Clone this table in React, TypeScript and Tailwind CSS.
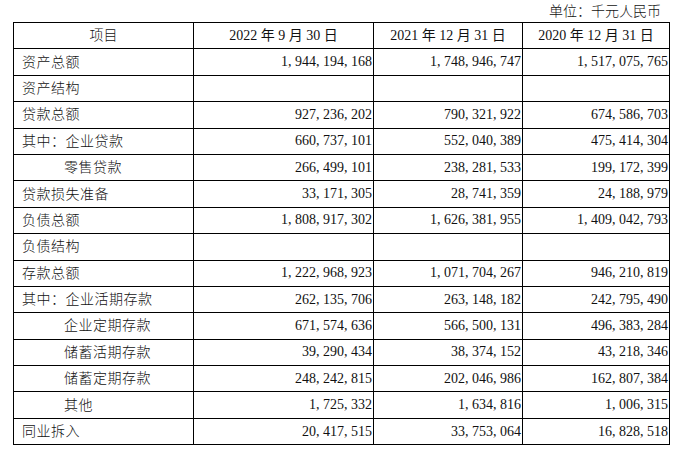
// 资产负债主要指标表
const ROWS: { label: string; indent?: boolean; values?: [string, string, string] }[] = [
  { label: '资产总额', values: ['1, 944, 194, 168', '1, 748, 946, 747', '1, 517, 075, 765'] },
  { label: '资产结构' },
  { label: '贷款总额', values: ['927, 236, 202', '790, 321, 922', '674, 586, 703'] },
  { label: '其中：企业贷款', values: ['660, 737, 101', '552, 040, 389', '475, 414, 304'] },
  { label: '零售贷款', indent: true, values: ['266, 499, 101', '238, 281, 533', '199, 172, 399'] },
  { label: '贷款损失准备', values: ['33, 171, 305', '28, 741, 359', '24, 188, 979'] },
  { label: '负债总额', values: ['1, 808, 917, 302', '1, 626, 381, 955', '1, 409, 042, 793'] },
  { label: '负债结构' },
  { label: '存款总额', values: ['1, 222, 968, 923', '1, 071, 704, 267', '946, 210, 819'] },
  { label: '其中：企业活期存款', values: ['262, 135, 706', '263, 148, 182', '242, 795, 490'] },
  { label: '企业定期存款', indent: true, values: ['671, 574, 636', '566, 500, 131', '496, 383, 284'] },
  { label: '储蓄活期存款', indent: true, values: ['39, 290, 434', '38, 374, 152', '43, 218, 346'] },
  { label: '储蓄定期存款', indent: true, values: ['248, 242, 815', '202, 046, 986', '162, 807, 384'] },
  { label: '其他', indent: true, values: ['1, 725, 332', '1, 634, 816', '1, 006, 315'] },
  { label: '同业拆入', values: ['20, 417, 515', '33, 753, 064', '16, 828, 518'] },
];

const FONT = '"Liberation Serif", "Noto Sans CJK SC", serif';

export default function App() {
  return (
    <div className="h-[452px] w-[680px] overflow-hidden bg-white text-[14px] text-[#111]" style={{ fontFamily: FONT }}>
      {/* titre coupe en haut de la capture */}
      <div className="h-[2px] overflow-hidden pl-[47px] text-[#888]">
        <div className="-mt-[15px] leading-[17px]">（二）资产负债情况表</div>
      </div>

      <div className="flex h-[20px] items-center justify-end pr-[19px] leading-none font-light">单位：千元人民币</div>

      <table className="ml-[13px] w-[656px] table-fixed border-collapse border border-black">
        <colgroup>
          <col className="w-[180px]" />
          <col className="w-[180px]" />
          <col className="w-[149px]" />
          <col className="w-[147px]" />
        </colgroup>
        <thead>
          <tr className="h-[26.4px]">
            <th className="border border-black p-0 text-center font-light">项目</th>
            <th className="border border-black p-0 text-center font-normal">2022 年 9 月 30 日</th>
            <th className="border border-black p-0 text-center font-normal">2021 年 12 月 31 日</th>
            <th className="border border-black p-0 text-center font-normal">2020 年 12 月 31 日</th>
          </tr>
        </thead>
        <tbody>
          {ROWS.map((row) => (
            <tr key={row.label} className="h-[26.4px]">
              <td className={`border border-black py-0 pr-1 font-light tracking-[0.5px] ${row.indent ? 'pl-[50px]' : 'pl-[8px]'}`}>
                {row.label}
              </td>
              {[0, 1, 2].map((i) => (
                <td key={i} className="border border-black py-0 pl-1 pr-[1px] text-right leading-none">
                  {row.values ? row.values[i] : ''}
                </td>
              ))}
            </tr>
          ))}
        </tbody>
      </table>
    </div>
  );
}
